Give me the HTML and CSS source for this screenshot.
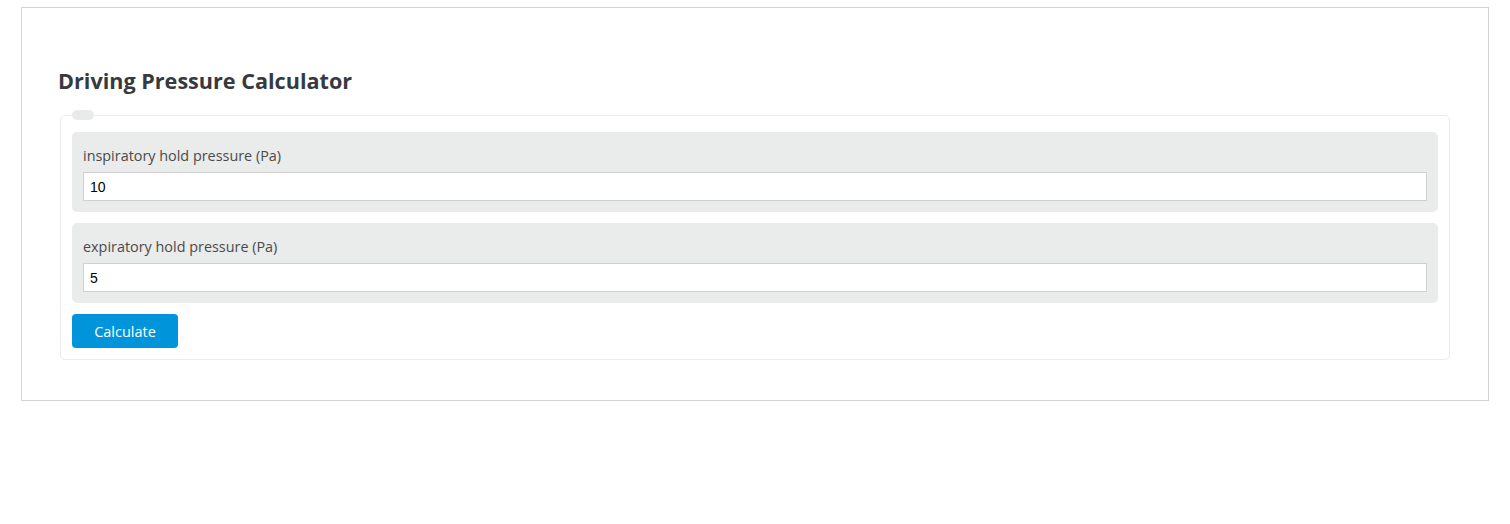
FILE: index.html
```html
<!DOCTYPE html>
<html lang="en">
<head>
  <meta charset="UTF-8">
  <title>Driving Pressure Calculator</title>
  <meta name="viewport" content="width=device-width, initial-scale=1.0">
  <link rel="stylesheet" href="styles.css">
</head>
<body>
  <div class="calc-box">
    <h2 class="calc-title">Driving Pressure Calculator</h2>
    <fieldset class="calc-form">
      <legend></legend>
      <div class="field">
        <label for="pip">inspiratory hold pressure (Pa)</label>
        <input type="text" id="pip" value="10">
      </div>
      <div class="field">
        <label for="peep">expiratory hold pressure (Pa)</label>
        <input type="text" id="peep" value="5">
      </div>
      <button type="button" onclick="calculate()">Calculate</button>
    </fieldset>
  </div>

  <script>
    function calculate() {
      const pip = parseFloat(document.getElementById("pip").value);
      const peep = parseFloat(document.getElementById("peep").value);
      if (isNaN(pip) || isNaN(peep)) return;
      alert("Driving pressure: " + (pip - peep) + " Pa");
    }
  </script>
</body>
</html>
```

FILE: styles.css
```css
body {
  margin: 0;
  padding: 7px 21px;
  font-family: "Segoe UI", "Open Sans", sans-serif;
  background: #fff;
}
.calc-box {
  border: 1px solid #d2d2d2;
  padding: 57px 38px 40px;
}
.calc-title {
  margin: 0 0 13px -2px;
  font-size: 21.6px;
  font-weight: 700;
  line-height: 32px;
  color: #363a3f;
}
.calc-form {
  margin: 0;
  padding: 12px 11px 11px;
  border: 1px solid #ececec;
  border-radius: 5px;
}
.calc-form legend {
  width: 22px;
  height: 10px;
  padding: 0;
  background: #e9ebeb;
  border-radius: 5px;
}
.field {
  display: flex;
  flex-direction: column;
  padding: 13px 11px 11px;
  margin-bottom: 11px;
  background: #eaebeb;
  border-radius: 5px;
}
.field label {
  font-size: 14.4px;
  line-height: 21px;
  margin-bottom: 6px;
  color: #4a4a4a;
}
.field input {
  height: 29px;
  box-sizing: border-box;
  padding: 0 6px;
  border: 1px solid #d0d0d0;
  font-family: "Liberation Sans", Arial, sans-serif;
  font-size: 14px;
  color: #000;
  background: #fff;
}
button {
  width: 106px;
  height: 34px;
  border: none;
  border-radius: 4px;
  background-color: #0095da;
  color: #fff;
  font-family: "Segoe UI", "Open Sans", sans-serif;
  font-size: 14.5px;
  cursor: pointer;
}
button:hover {
  background-color: #0085c3;
}
```
